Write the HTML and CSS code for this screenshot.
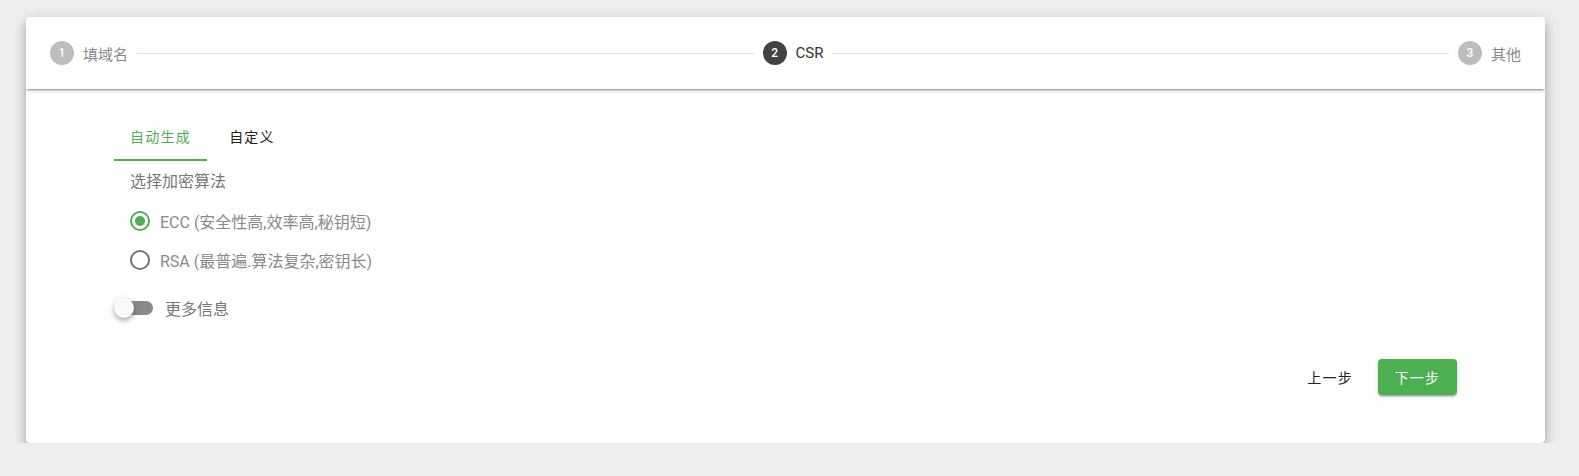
FILE: index.html
```html
<!DOCTYPE html>
<html lang="zh-CN">
<head>
    <meta charset="UTF-8">
    <title>申请证书</title>
    <link rel="stylesheet" href="styles.css">
</head>
<body>
    <div class="stepper">
        <div class="stepper-header">
            <div class="step">
                <span class="step-num">1</span>
                <span class="step-label">填域名</span>
            </div>
            <div class="divider"></div>
            <div class="step active">
                <span class="step-num">2</span>
                <span class="step-label">CSR</span>
            </div>
            <div class="divider"></div>
            <div class="step">
                <span class="step-num">3</span>
                <span class="step-label">其他</span>
            </div>
        </div>
        <div class="stepper-content">
            <div class="tabs">
                <div class="tab active">自动生成</div>
                <div class="tab">自定义</div>
            </div>
            <div class="tab-body">
                <div class="field-label">选择加密算法</div>
                <label class="radio checked">
                    <span class="radio-ring"></span>
                    ECC (安全性高,效率高,秘钥短)
                </label>
                <label class="radio">
                    <span class="radio-ring"></span>
                    RSA (最普遍.算法复杂,密钥长)
                </label>
            </div>
            <label class="switch">
                <span class="switch-track"><span class="switch-thumb"></span></span>
                更多信息
            </label>
            <div class="actions">
                <button class="btn btn-text">上一步</button>
                <button class="btn btn-primary">下一步</button>
            </div>
        </div>
    </div>
</body>
</html>
```

FILE: styles.css
```css
* {
    box-sizing: border-box;
}
body {
    margin: 0;
    padding: 17px 34px 0 26px;
    background: #eeeeee;
    font-family: Roboto, "Noto Sans CJK SC", sans-serif;
    color: #333;
}
.stepper {
    height: 426px;
    background: #fff;
    border-radius: 4px;
    box-shadow: 0 5px 5px -3px rgba(0, 0, 0, 0.25),
                0 8px 10px 1px rgba(0, 0, 0, 0.16),
                0 3px 14px 2px rgba(0, 0, 0, 0.12);
    overflow: hidden;
}
.stepper-header {
    height: 72px;
    display: flex;
    align-items: center;
    padding: 0 24px;
    box-shadow: 0 3px 1px -2px rgba(0, 0, 0, 0.2),
                0 2px 2px 0 rgba(0, 0, 0, 0.14),
                0 1px 5px 0 rgba(0, 0, 0, 0.12);
    position: relative;
}
.step {
    display: flex;
    align-items: center;
}
.step-num {
    width: 24px;
    height: 24px;
    border-radius: 50%;
    background: #bdbdbd;
    color: #fff;
    font-size: 12px;
    font-weight: 500;
    display: flex;
    align-items: center;
    justify-content: center;
    margin-right: 9px;
}
.step-label {
    font-size: 15px;
    color: #8a8a8a;
}
.step.active .step-num {
    background: #424242;
}
.step.active .step-label {
    color: #333;
}
.divider {
    flex: 1;
    height: 1px;
    background: #e0e0e0;
    margin: 0 9px;
}
.stepper-content {
    padding: 24px 88px 0 88px;
}
.tabs {
    display: flex;
    height: 48px;
}
.tab {
    min-width: 90px;
    padding: 0 16px;
    display: flex;
    align-items: center;
    justify-content: center;
    font-size: 14px;
    letter-spacing: 1.25px;
    color: #222;
    border-bottom: 2px solid transparent;
}
.tab.active {
    color: #4caf50;
    border-bottom-color: #4caf50;
}
.tab-body {
    padding: 0 16px;
}
.field-label {
    margin-top: 9px;
    line-height: 24px;
    font-size: 16px;
    color: #777;
}
.radio {
    display: flex;
    align-items: center;
    height: 24px;
    margin-top: 15px;
    font-size: 16px;
    color: #8a8a8a;
}
.radio + .radio {
    margin-top: 15px;
}
.radio-ring {
    width: 20px;
    height: 20px;
    border: 2px solid #757575;
    border-radius: 50%;
    margin-right: 10px;
    display: flex;
    align-items: center;
    justify-content: center;
}
.radio.checked .radio-ring {
    border-color: #4caf50;
}
.radio.checked .radio-ring::after {
    content: "";
    width: 10px;
    height: 10px;
    border-radius: 50%;
    background: #4caf50;
}
.switch {
    display: flex;
    align-items: center;
    height: 24px;
    margin-top: 24px;
    font-size: 16px;
    color: #777;
}
.switch-track {
    width: 37px;
    height: 14px;
    border-radius: 7px;
    background: #8a8a8a;
    margin-left: 2px;
    margin-right: 12px;
    display: flex;
    align-items: center;
}
.switch-thumb {
    width: 20px;
    height: 20px;
    border-radius: 50%;
    background: #fafafa;
    margin-left: -2px;
    box-shadow: 0 2px 4px -1px rgba(0, 0, 0, 0.2),
                0 4px 5px 0 rgba(0, 0, 0, 0.14),
                0 1px 10px 0 rgba(0, 0, 0, 0.12);
}
.actions {
    display: flex;
    justify-content: flex-end;
    align-items: center;
    margin-top: 39px;
}
.btn {
    height: 36px;
    border: none;
    border-radius: 4px;
    font-family: Roboto, "Noto Sans CJK SC", sans-serif;
    font-size: 14px;
    letter-spacing: 1.25px;
    padding: 0 16px;
    cursor: pointer;
}
.btn-text {
    background: transparent;
    color: #222;
    margin-right: 9px;
}
.btn-primary {
    width: 79px;
    background: #4caf50;
    color: #fff;
    box-shadow: 0 3px 1px -2px rgba(0, 0, 0, 0.2),
                0 2px 2px 0 rgba(0, 0, 0, 0.14),
                0 1px 5px 0 rgba(0, 0, 0, 0.12);
}
```
